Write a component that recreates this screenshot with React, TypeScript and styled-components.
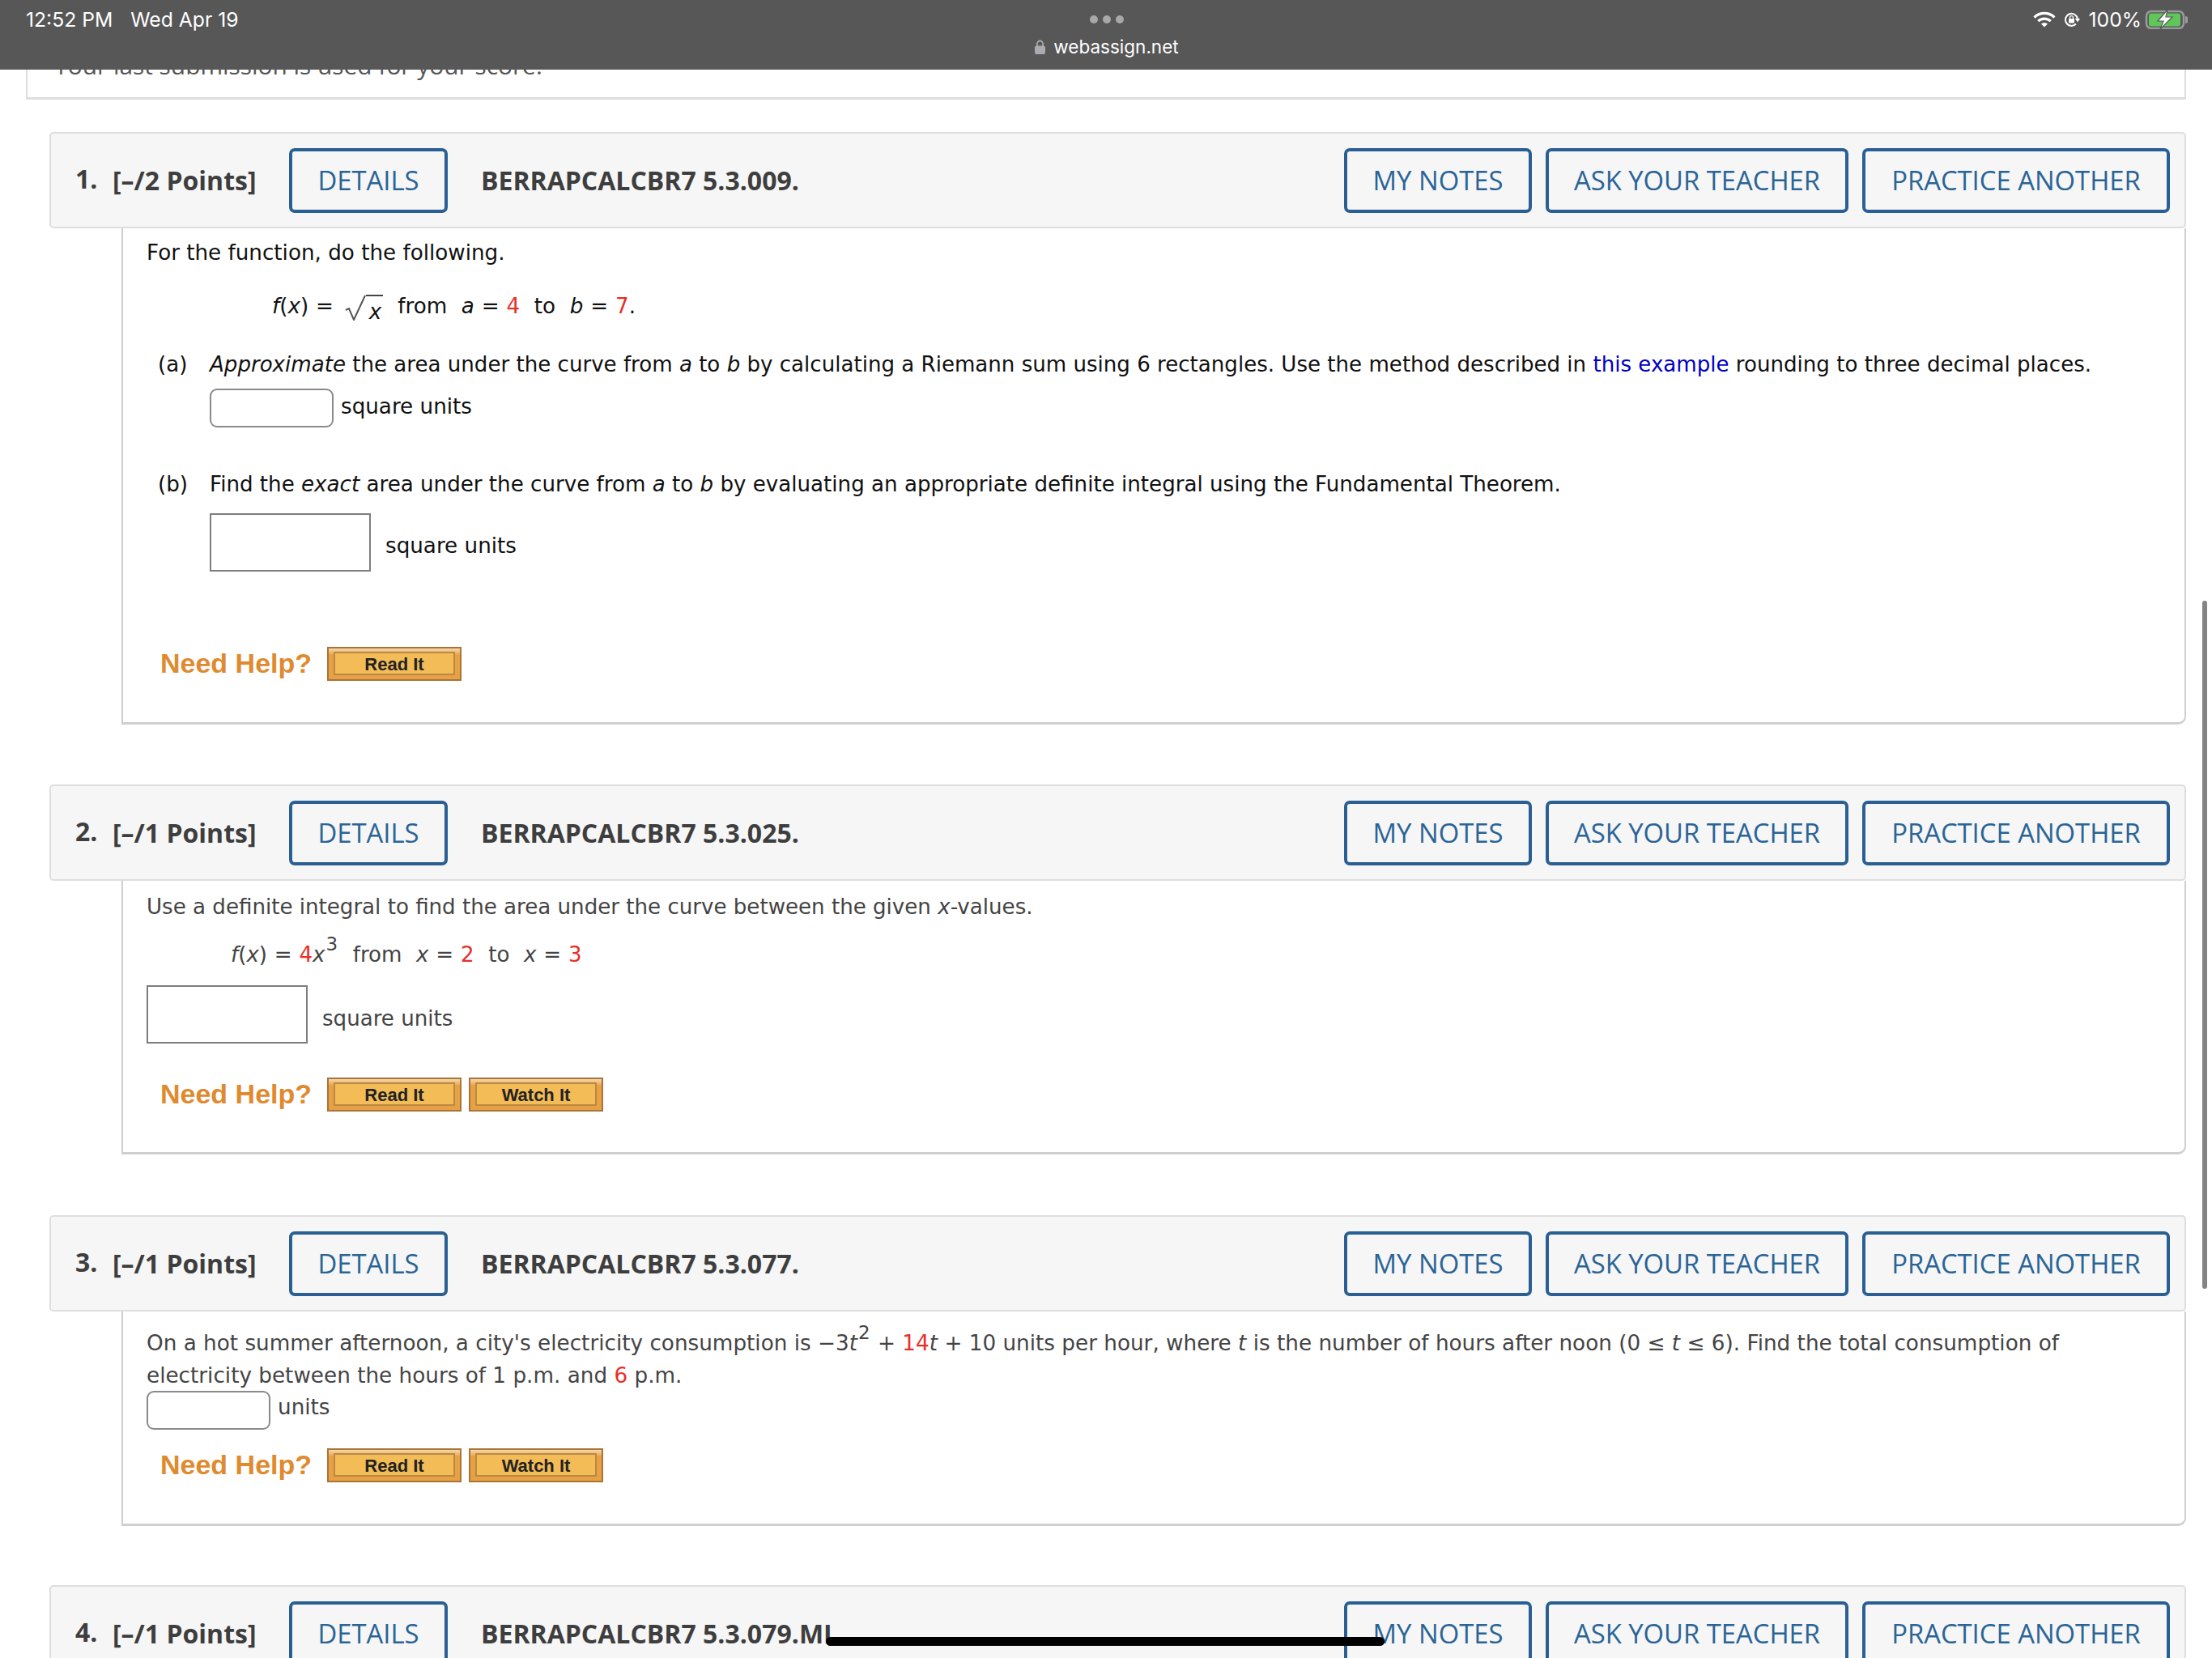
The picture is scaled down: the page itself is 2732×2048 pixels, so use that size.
import React from "react";
import styled, { createGlobalStyle } from "styled-components";

const Global = createGlobalStyle`
  html, body { margin: 0; padding: 0; background: #fff; }
  #root { width: 2732px; height: 2048px; }
`;

const Page = styled.div`
  position: relative;
  width: 2732px;
  height: 2048px;
  overflow: hidden;
  background: #fff;
  padding: 0 32px;
  box-sizing: border-box;
`;

const StatusBar = styled.div`
  position: absolute;
  left: 0;
  top: 0;
  right: 0;
  height: 86px;
  background: #575757;
  color: #fff;
  font-family: Inter, "Liberation Sans", sans-serif;
  font-size: 24.7px;
  display: grid;
  grid-template-columns: 1fr auto 1fr;
  padding: 0 30px 0 32px;
  box-sizing: border-box;
`;

const StatusLeft = styled.div`
  display: flex;
  gap: 22px;
  padding-top: 9px;
  line-height: 30px;
`;

const StatusCenter = styled.div`
  display: flex;
  flex-direction: column;
  align-items: center;
  padding-top: 19px;
`;

const Dots = styled.div`
  display: flex;
  gap: 6px;
`;

const Dot = styled.span`
  width: 10px;
  height: 10px;
  border-radius: 50%;
  background: #a8a8a8;
`;

const Url = styled.div`
  display: flex;
  align-items: center;
  gap: 10px;
  margin-top: 14px;
  line-height: 30px;
  font-size: 22.5px;
`;

const StatusRight = styled.div`
  display: flex;
  justify-content: flex-end;
  align-items: flex-start;
  gap: 10px;
  padding-top: 9px;
  line-height: 30px;
`;

const StatusIcon = styled.svg<{ $top: number; $left?: number }>`
  display: block;
  margin-top: ${(p) => p.$top}px;
  margin-left: ${(p) => p.$left ?? 0}px;
`;

const HomeBar = styled.div`
  position: absolute;
  left: 1020px;
  top: 2022px;
  width: 690px;
  height: 11px;
  border-radius: 6px;
  background: #000;
`;

const ScrollThumb = styled.div`
  position: absolute;
  left: 2720px;
  top: 742px;
  width: 6px;
  height: 850px;
  border-radius: 3px;
  background: #848484;
`;

const TopPanel = styled.div`
  width: 2668px;
  height: 123px;
  box-sizing: border-box;
  border: 2px solid #dedede;
  border-top: 0;
  border-bottom-width: 3px;
  padding: 61px 0 0 33px;
  font-family: "Open Sans", sans-serif;
  font-size: 29.85px;
  line-height: 40px;
  color: #555;
`;

const Question = styled.section<{ $top: number }>`
  margin: ${(p) => p.$top}px 0 0 29px;
  width: 2639px;
`;

const Header = styled.header`
  height: 119px;
  box-sizing: border-box;
  display: flex;
  align-items: center;
  padding: 0 18px 0 30px;
  background: #f6f6f6;
  border: 2px solid #dedede;
  border-radius: 5px;
  font-family: "Open Sans", sans-serif;
  color: #3e3e3e;
`;

const Num = styled.span`
  font-size: 32px;
  font-weight: 700;
  width: 46px;
  margin-top: -4px;
`;

const Points = styled.span`
  font-size: 32px;
  font-weight: 700;
  width: 218px;
  white-space: nowrap;
`;

const Code = styled.span`
  font-size: 32px;
  font-weight: 700;
  margin-left: 41px;
  flex: 1;
  white-space: nowrap;
`;

const Actions = styled.div`
  display: flex;
  gap: 17px;
`;

const ActionButton = styled.button<{ $w: number }>`
  width: ${(p) => p.$w}px;
  height: 80px;
  box-sizing: border-box;
  padding: 0;
  border: 4px solid #2a5f94;
  border-radius: 7px;
  background: #f6f6f6;
  color: #2a6496;
  font-family: "Open Sans", sans-serif;
  font-size: 32.8px;
  white-space: nowrap;
`;

const Body = styled.div<{ $tone: string; $pad: number; $bottom: number; $size: number }>`
  margin-left: 89px;
  box-sizing: border-box;
  border: 2px solid #cfcfcf;
  border-top: 0;
  border-bottom-width: 3px;
  border-bottom-right-radius: 10px;
  padding: ${(p) => p.$pad}px 0 ${(p) => p.$bottom}px 29px;
  font-family: "DejaVu Sans", sans-serif;
  font-size: ${(p) => p.$size}px;
  line-height: 40px;
  color: ${(p) => p.$tone};
`;

const Line = styled.div`
  white-space: nowrap;
`;

const Formula = styled.div<{ $top: number; $left: number }>`
  margin-top: ${(p) => p.$top}px;
  margin-left: ${(p) => p.$left}px;
  white-space: nowrap;
  word-spacing: 0.5px;
`;

const Part = styled.div<{ $top: number; $size: number }>`
  display: flex;
  margin: ${(p) => p.$top}px 0 0 14px;
  font-size: ${(p) => p.$size}px;
  white-space: nowrap;
`;

const PartLabel = styled.span`
  width: 64px;
`;

const AnswerRow = styled.div<{ $top: number; $left?: number; $gap: number; $lift?: number }>`
  display: flex;
  align-items: center;
  gap: ${(p) => p.$gap}px;
  margin: ${(p) => p.$top}px 0 0 ${(p) => p.$left ?? 0}px;
  & > span { position: relative; top: ${(p) => p.$lift ?? 0}px; }
`;

const RoundInput = styled.div<{ $w: number }>`
  width: ${(p) => p.$w}px;
  height: 48px;
  box-sizing: border-box;
  border: 2px solid #8a8a8a;
  border-radius: 9px;
  background: #fff;
`;

const SquareInput = styled.div`
  width: 199px;
  height: 72px;
  box-sizing: border-box;
  border: 2px solid #7d7d7d;
  background: #fff;
`;

const Red = styled.span`
  color: #e8302a;
`;

const LinkText = styled.span`
  color: #0000c4;
`;

const Sup = styled.sup`
  font-size: 23px;
  line-height: 0;
  vertical-align: 14px;
  margin-left: 1px;
  margin-right: 1px;
`;

const Radical = styled.span`
  display: inline-flex;
  align-items: flex-end;
  height: 32px;
  vertical-align: -9px;
  margin: 0 18px 0 5px;
`;

const RadicalBody = styled.span`
  border-top: 2px solid #444;
  height: 30px;
  line-height: 38px;
  padding: 0 2px 0 4px;
  font-style: italic;
`;

const HelpRow = styled.div<{ $top: number }>`
  display: flex;
  align-items: center;
  height: 42px;
  margin: ${(p) => p.$top}px 0 0 17px;
`;

const HelpLabel = styled.span`
  font-family: "Liberation Sans", sans-serif;
  font-size: 34px;
  font-weight: 700;
  color: #e08a30;
  width: 206px;
  line-height: 42px;
  margin-bottom: 3px;
  white-space: nowrap;
`;

const HelpButton = styled.div`
  width: 166px;
  height: 42px;
  box-sizing: border-box;
  margin-right: 9px;
  padding: 4px 6px 5px;
  background: linear-gradient(#f5d9ac 0, #e8a045 22%, #e8a045 100%);
  border: 2px solid #a87438;
`;

const HelpFace = styled.div`
  height: 100%;
  box-sizing: border-box;
  border: 2px solid #b98a45;
  background: #f3bc57;
  color: #222;
  font-family: "Liberation Sans", sans-serif;
  font-size: 22px;
  font-weight: 700;
  line-height: 27px;
  text-align: center;
`;

const RootSign = () => (
  <svg width="26" height="32" viewBox="0 0 26 32" style={{ display: "block" }}>
    <path d="M1 19 L5 17 L11 31 L25 1" fill="none" stroke="#555" strokeWidth="2" />
  </svg>
);

const Help = ({ top, watch }: { top: number; watch?: boolean }) => (
  <HelpRow $top={top}>
    <HelpLabel>Need Help?</HelpLabel>
    <HelpButton><HelpFace>Read It</HelpFace></HelpButton>
    {watch && <HelpButton><HelpFace>Watch It</HelpFace></HelpButton>}
  </HelpRow>
);

const QHeader = ({ n, pts, code }: { n: number; pts: string; code: string }) => (
  <Header>
    <Num>{n}.</Num>
    <Points>{pts}</Points>
    <ActionButton $w={196}>DETAILS</ActionButton>
    <Code>{code}</Code>
    <Actions>
      <ActionButton $w={232}>MY NOTES</ActionButton>
      <ActionButton $w={374}>ASK YOUR TEACHER</ActionButton>
      <ActionButton $w={380}>PRACTICE ANOTHER</ActionButton>
    </Actions>
  </Header>
);

export default function App() {
  return (
    <Page>
      <Global />
      <TopPanel>Your last submission is used for your score.</TopPanel>

      <Question $top={40}>
        <QHeader n={1} pts="[–/2 Points]" code="BERRAPCALCBR7 5.3.009." />
        <Body $tone="#111" $pad={10} $bottom={51} $size={26.2}>
          <Line>For the function, do the following.</Line>
          <Formula $top={26} $left={155}>
            <i>f</i>(<i>x</i>) = <Radical><RootSign /><RadicalBody>x</RadicalBody></Radical>from&nbsp; <i>a</i> = <Red>4</Red>&nbsp; to&nbsp; <i>b</i> = <Red>7</Red>.
          </Formula>
          <Part $top={32} $size={26.08}>
            <PartLabel>(a)</PartLabel>
            <span>
              <i>Approximate</i> the area under the curve from <i>a</i> to <i>b</i> by calculating a Riemann sum using 6 rectangles. Use the method described in <LinkText>this example</LinkText> rounding to three decimal places.
            </span>
          </Part>
          <AnswerRow $top={10} $left={78} $gap={9} $lift={-2}>
            <RoundInput $w={153} />
            <span>square units</span>
          </AnswerRow>
          <Part $top={50} $size={26.13}>
            <PartLabel>(b)</PartLabel>
            <span>
              Find the <i>exact</i> area under the curve from <i>a</i> to <i>b</i> by evaluating an appropriate definite integral using the Fundamental Theorem.
            </span>
          </Part>
          <AnswerRow $top={16} $left={78} $gap={18} $lift={4}>
            <SquareInput />
            <span>square units</span>
          </AnswerRow>
          <Help top={93} />
        </Body>
      </Question>

      <Question $top={74}>
        <QHeader n={2} pts="[–/1 Points]" code="BERRAPCALCBR7 5.3.025." />
        <Body $tone="#444" $pad={12} $bottom={50} $size={26.1}>
          <Line>Use a definite integral to find the area under the curve between the given <i>x</i>-values.</Line>
          <Formula $top={19} $left={104}>
            <i>f</i>(<i>x</i>) = <Red>4</Red><i>x</i><Sup>3</Sup>&nbsp; from&nbsp; <i>x</i> = <Red>2</Red>&nbsp; to&nbsp; <i>x</i> = <Red>3</Red>
          </Formula>
          <AnswerRow $top={18} $gap={18} $lift={5}>
            <SquareInput />
            <span>square units</span>
          </AnswerRow>
          <Help top={42} watch />
        </Body>
      </Question>

      <Question $top={75}>
        <QHeader n={3} pts="[–/1 Points]" code="BERRAPCALCBR7 5.3.077." />
        <Body $tone="#444" $pad={19} $bottom={51} $size={26.26}>
          <Line>
            On a hot summer afternoon, a city's electricity consumption is −3<i>t</i><Sup>2</Sup> + <Red>14</Red><i>t</i> + 10 units per hour, where <i>t</i> is the number of hours after noon (0 ≤ <i>t</i> ≤ 6). Find the total consumption of
          </Line>
          <Line>electricity between the hours of 1 p.m. and <Red>6</Red> p.m.</Line>
          <AnswerRow $top={-1} $gap={9} $lift={-4}>
            <RoundInput $w={153} />
            <span>units</span>
          </AnswerRow>
          <Help top={23} watch />
        </Body>
      </Question>

      <Question $top={73}>
        <QHeader n={4} pts="[–/1 Points]" code="BERRAPCALCBR7 5.3.079.MI." />
      </Question>

      <StatusBar>
        <StatusLeft>
          <span>12:52 PM</span>
          <span>Wed Apr 19</span>
        </StatusLeft>
        <StatusCenter>
          <Dots><Dot /><Dot /><Dot /></Dots>
          <Url>
            <svg width="13" height="18" viewBox="0 0 13 18">
              <path d="M3 8V5a3.5 3.5 0 0 1 7 0V8" fill="none" stroke="#aaaab0" strokeWidth="1.8" />
              <rect x="0" y="7.5" width="13" height="10.5" rx="2" fill="#aaaab0" />
            </svg>
            <span>webassign.net</span>
          </Url>
        </StatusCenter>
        <StatusRight>
          <StatusIcon $top={5} width="28" height="20" viewBox="0 0 28 20">
            <path d="M1.5 7.5a18 18 0 0 1 25 0M6.2 12.2a11.2 11.2 0 0 1 15.6 0" fill="none" stroke="#fff" strokeWidth="3.2" />
            <path d="M14 19.5 L10 15.5a5.8 5.8 0 0 1 8 0Z" fill="#fff" />
          </StatusIcon>
          <StatusIcon $top={6} width="21" height="18" viewBox="0 0 21 18">
            <path d="M15 14.5A7.5 7.5 0 1 1 17 9" fill="none" stroke="#fff" strokeWidth="2" />
            <path d="M13.8 8H20.2L17 12.2Z" fill="#fff" />
            <rect x="6" y="8" width="7" height="5.5" rx="1" fill="#fff" />
            <path d="M7.5 8V6.6a2 2 0 0 1 4 0V8" fill="none" stroke="#fff" strokeWidth="1.3" />
          </StatusIcon>
          <span>100%</span>
          <StatusIcon $top={3} $left={-6} width="53" height="24" viewBox="0 0 53 24">
            <rect x="2" y="2" width="46" height="21" rx="6" fill="none" stroke="#9a9a9a" strokeWidth="2.5" />
            <rect x="5" y="4.5" width="39" height="16" rx="3" fill="#5fc65a" />
            <path d="M50 8a4.5 4.5 0 0 1 0 9Z" fill="#9a9a9a" />
            <path d="M28 0 L16 14 H23 L19 24 L34 9 H26 Z" fill="#fff" stroke="#575757" strokeWidth="1.2" />
          </StatusIcon>
        </StatusRight>
      </StatusBar>

      <HomeBar />
      <ScrollThumb />
    </Page>
  );
}
